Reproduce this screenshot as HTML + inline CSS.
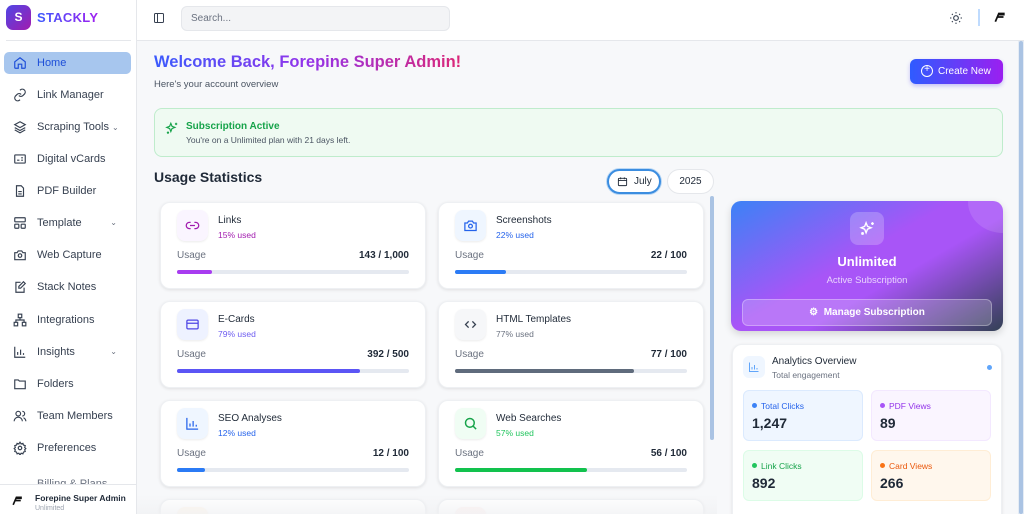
<!DOCTYPE html>
<html><head><meta charset="utf-8"><style>
*{box-sizing:border-box;margin:0;padding:0}
html,body{width:1024px;height:514px;overflow:hidden}
body{font-family:"Liberation Sans",sans-serif;background:#f7f8fa;position:relative;color:#1f2937}
#root{position:absolute;left:0;top:0;width:1024px;height:514px;overflow:hidden}
.abs{position:absolute}
.sb{left:0;top:0;width:137px;height:514px;background:#fff;border-right:1px solid #e5e7eb;overflow:hidden}
.logo{left:6px;top:5px;width:25px;height:25px;border-radius:7px;background:linear-gradient(135deg,#4f46e5,#a21caf);color:#fff;font-weight:bold;font-size:12px;text-align:center;line-height:25px}
.brand{left:37px;top:10px;font-weight:bold;font-size:13px;letter-spacing:.3px;background:linear-gradient(90deg,#3b5bfd,#a020f0);-webkit-background-clip:text;color:transparent}
.nav{left:4px;width:127px;height:22px;border-radius:5px;font-size:11px;color:#374151;line-height:22px;padding-left:33px}
.nav svg{position:absolute;left:9px;top:4px}
.nav .ch{position:absolute;right:14px;top:0;font-size:8px;color:#6b7280}
.hdr{left:137px;top:0;width:887px;height:41px;background:#fff;border-bottom:1px solid #e5e7eb}
.card{background:#fff;border-radius:10px;box-shadow:0 1px 3px rgba(0,0,0,.1);border:1px solid #eef0f3}
.ic{position:absolute;left:16px;top:7px;width:31px;height:31px;border-radius:8px;box-shadow:0 1px 2px rgba(0,0,0,.08)}
.ic svg{position:absolute;left:8px;top:8px}
.ct{position:absolute;left:57px;top:12px;font-size:10px;color:#1f2937}
.cu{position:absolute;left:57px;top:27px;font-size:8.5px}
.ul{position:absolute;left:16px;top:47px;font-size:10px;color:#6b7280}
.uv{position:absolute;right:16px;top:47px;font-size:10px;font-weight:bold;color:#1f2937}
.bar{position:absolute;left:16px;right:16px;top:67px;height:4px;border-radius:2px;background:#e5e9f0}
.bar i{display:block;height:4px;border-radius:2px}
.st{width:120px;height:51px;border-radius:6px;font-size:8.5px;padding:10px 8px}
.st b{display:block;font-size:14px;color:#1f2937;margin-top:4px}
.st .d{display:inline-block;width:5px;height:5px;border-radius:50%;margin-right:4px;vertical-align:1px}
</style></head><body><div id="root">
<div class="abs sb">
<div class="abs logo">S</div><div class="abs brand">STACKLY</div>
<div class="abs" style="left:6px;top:40px;width:125px;border-top:1px solid #e5e7eb"></div>
<div class="abs nav" style="top:52px;background:#a7c6ee;color:#1d4ed8"><svg width="14" height="14" viewBox="0 0 24 24" fill="none" stroke="#1d4ed8" stroke-width="2"><path d="M3 10l9-7 9 7v10a1 1 0 0 1-1 1h-5v-7H9v7H4a1 1 0 0 1-1-1z"/></svg>Home</div>
<div class="abs nav" style="top:84px"><svg width="14" height="14" viewBox="0 0 24 24" fill="none" stroke="#374151" stroke-width="2"><path d="M10 13a5 5 0 0 0 7 0l3-3a5 5 0 0 0-7-7l-1 1M14 11a5 5 0 0 0-7 0l-3 3a5 5 0 0 0 7 7l1-1"/></svg>Link Manager</div>
<div class="abs nav" style="top:116px"><svg width="14" height="14" viewBox="0 0 24 24" fill="none" stroke="#374151" stroke-width="2"><path d="M12 3l9 5-9 5-9-5zM3 13l9 5 9-5M3 17l9 5 9-5"/></svg>Scraping Tools <span style="font-size:8px;color:#6b7280">⌄</span></div>
<div class="abs nav" style="top:148px"><svg width="14" height="14" viewBox="0 0 24 24" fill="none" stroke="#374151" stroke-width="2"><rect x="3" y="5" width="18" height="14" rx="1"/><path d="M7 14h4M14 10h3M14 14h3"/></svg>Digital vCards</div>
<div class="abs nav" style="top:180px"><svg width="14" height="14" viewBox="0 0 24 24" fill="none" stroke="#374151" stroke-width="2"><path d="M14 3H6v18h12V7zM9 13h6M9 17h6"/></svg>PDF Builder</div>
<div class="abs nav" style="top:212px"><svg width="14" height="14" viewBox="0 0 24 24" fill="none" stroke="#374151" stroke-width="2"><rect x="3" y="3" width="18" height="7" rx="1"/><rect x="3" y="14" width="7" height="7" rx="1"/><rect x="14" y="14" width="7" height="7" rx="1"/></svg>Template<span class="ch">⌄</span></div>
<div class="abs nav" style="top:244px"><svg width="14" height="14" viewBox="0 0 24 24" fill="none" stroke="#374151" stroke-width="2"><path d="M3 8h4l2-3h6l2 3h4v12H3z"/><circle cx="12" cy="13" r="3"/></svg>Web Capture</div>
<div class="abs nav" style="top:276px"><svg width="14" height="14" viewBox="0 0 24 24" fill="none" stroke="#374151" stroke-width="2"><path d="M13 4H5v17h14v-8M18 3l3 3-8 8h-3v-3z"/></svg>Stack Notes</div>
<div class="abs nav" style="top:309px"><svg width="14" height="14" viewBox="0 0 24 24" fill="none" stroke="#374151" stroke-width="2"><rect x="9" y="2" width="6" height="6"/><rect x="2" y="16" width="6" height="6"/><rect x="16" y="16" width="6" height="6"/><path d="M5 16v-4h14v4M12 8v4"/></svg>Integrations</div>
<div class="abs nav" style="top:341px"><svg width="14" height="14" viewBox="0 0 24 24" fill="none" stroke="#374151" stroke-width="2"><path d="M3 3v18h18M8 17v-5M13 17V8M18 17v-3"/></svg>Insights<span class="ch">⌄</span></div>
<div class="abs nav" style="top:373px"><svg width="14" height="14" viewBox="0 0 24 24" fill="none" stroke="#374151" stroke-width="2"><path d="M3 5h6l2 2h10v13H3z"/></svg>Folders</div>
<div class="abs nav" style="top:405px"><svg width="14" height="14" viewBox="0 0 24 24" fill="none" stroke="#374151" stroke-width="2"><circle cx="9" cy="8" r="4"/><path d="M2 21a7 7 0 0 1 14 0M16 4a4 4 0 0 1 0 8M22 21a7 7 0 0 0-4-6"/></svg>Team Members</div>
<div class="abs nav" style="top:437px"><svg width="14" height="14" viewBox="0 0 24 24" fill="none" stroke="#374151" stroke-width="2"><circle cx="12" cy="12" r="3"/><path d="M12 2l2 3 3-1 1 3 3 1-1 3 2 2-2 2 1 3-3 1-1 3-3-1-2 3-2-3-3 1-1-3-3-1 1-3-2-2 2-2-1-3 3-1 1-3 3 1z"/></svg>Preferences</div>
<div class="abs nav" style="top:473px;color:#6b7280">Billing &amp; Plans</div>
<div class="abs" style="left:0;top:484px;width:136px;height:30px;background:#fff;border-top:1px solid #e5e7eb">
<svg class="abs" style="left:11px;top:9px" width="13" height="13" viewBox="0 0 24 24" fill="none" stroke="#111" stroke-width="3"><path d="M4 20l6-14h10M8 12h10M9 8h11"/></svg>
<div class="abs" style="left:35px;top:8px;font-size:8.5px;font-weight:bold">Forepine Super Admin</div>
<div class="abs" style="left:35px;top:20px;font-size:7px;color:#9ca3af">Unlimited</div></div>
</div>
<div class="abs hdr">
<svg class="abs" style="left:16px;top:12px" width="12" height="12" viewBox="0 0 24 24" fill="none" stroke="#374151" stroke-width="2"><rect x="3" y="3" width="18" height="18" rx="2"/><path d="M9 3v18"/></svg>
<div class="abs" style="left:44px;top:6px;width:269px;height:25px;border-radius:6px;background:#f3f4f6;border:1px solid #e5e7eb;font-size:10px;color:#6b7280;line-height:23px;padding-left:9px">Search...</div>
<svg class="abs" style="left:812px;top:11px" width="14" height="14" viewBox="0 0 24 24" fill="none" stroke="#374151" stroke-width="2"><circle cx="12" cy="12" r="4"/><path d="M12 2v2M12 20v2M2 12h2M20 12h2M5 5l1.5 1.5M17.5 17.5L19 19M5 19l1.5-1.5M17.5 6.5L19 5"/></svg>
<div class="abs" style="left:841px;top:9px;width:2px;height:17px;background:#bfdbfe"></div>
<svg class="abs" style="left:856px;top:10px" width="14" height="14" viewBox="0 0 24 24" fill="none" stroke="#111" stroke-width="3"><path d="M4 20l6-14h10M8 12h10M9 8h11"/></svg>
</div>
<div class="abs" style="left:1018px;top:41px;width:6px;height:473px;background:#e5ecf5"><div style="margin:0 1px;height:473px;background:#aac3e3;border-radius:3px"></div></div>
<div class="abs" style="left:154px;top:53px;font-size:16.5px;font-weight:bold;background:linear-gradient(90deg,#3b5bfd,#9333ea 50%,#db2777);-webkit-background-clip:text;color:transparent">Welcome Back, Forepine Super Admin!</div>
<div class="abs" style="left:154px;top:79px;font-size:9.5px;color:#4b5563">Here's your account overview</div>
<div class="abs" style="left:910px;top:59px;width:93px;height:25px;border-radius:6px;background:linear-gradient(90deg,#2f5bff,#9b1ff0);color:#fff;font-size:10px;line-height:25px;padding-left:28px;box-shadow:0 2px 4px rgba(80,60,240,.3)"><span style="position:absolute;left:11px;top:6px;width:12px;height:12px;border:1.5px solid #fff;border-radius:50%;font-size:10px;line-height:8px;text-align:center">+</span>Create New</div>
<div class="abs" style="left:154px;top:108px;width:849px;height:49px;border-radius:8px;background:#effaf2;border:1px solid #bfeccc">
<svg class="abs" style="left:10px;top:12px" width="14" height="14" viewBox="0 0 24 24" fill="none" stroke="#16a34a" stroke-width="2"><path d="M10 4l2 5 5 2-5 2-2 5-2-5-5-2 5-2zM19 3v4M17 5h4M5 19a1 1 0 1 0 0.1 0"/></svg>
<div class="abs" style="left:31px;top:12px;font-size:10px;font-weight:bold;color:#16a34a">Subscription Active</div>
<div class="abs" style="left:31px;top:26px;font-size:8.5px;color:#4b5563">You're on a Unlimited plan with 21 days left.</div></div>
<div class="abs" style="left:154px;top:169px;font-size:14px;font-weight:bold">Usage Statistics</div>
<div class="abs" style="left:607px;top:169px;width:54px;height:25px;border-radius:13px;background:#fff;border:2px solid #3b8de0;font-size:10px;line-height:21px;padding-left:25px;box-shadow:0 0 0 1px #bcd9f5"><svg class="abs" style="left:8px;top:5px" width="11" height="11" viewBox="0 0 24 24" fill="none" stroke="#1f2937" stroke-width="2"><rect x="3" y="5" width="18" height="16" rx="2"/><path d="M3 10h18M8 3v4M16 3v4"/></svg>July</div>
<div class="abs" style="left:667px;top:169px;width:47px;height:25px;border-radius:13px;background:#fff;border:1px solid #e5e7eb;font-size:10px;line-height:23px;text-align:center">2025</div>
<div class="abs" style="left:710px;top:196px;width:4px;height:244px;background:#aac3e3;border-radius:2px"></div>

<div class="abs card" style="left:160px;top:202px;width:266px;height:87px"><div class="ic" style="background:#faf5ff"><svg width="15" height="15" viewBox="0 0 24 24" fill="none" stroke="#a21caf" stroke-width="2"><path d="M9 7H7a5 5 0 0 0 0 10h2M15 7h2a5 5 0 0 1 0 10h-2M8 12h8"/></svg></div><div class="ct">Links</div><div class="cu" style="color:#a21caf">15% used</div><div class="ul">Usage</div><div class="uv">143 / 1,000</div><div class="bar"><i style="width:15%;background:#a83cf0"></i></div></div>
<div class="abs card" style="left:438px;top:202px;width:266px;height:87px"><div class="ic" style="background:#eff6ff"><svg width="15" height="15" viewBox="0 0 24 24" fill="none" stroke="#2563eb" stroke-width="2"><path d="M3 8h4l2-3h6l2 3h4v12H3z"/><circle cx="12" cy="13" r="3"/></svg></div><div class="ct">Screenshots</div><div class="cu" style="color:#2563eb">22% used</div><div class="ul">Usage</div><div class="uv">22 / 100</div><div class="bar"><i style="width:22%;background:#2b7bf5"></i></div></div>
<div class="abs card" style="left:160px;top:301px;width:266px;height:87px"><div class="ic" style="background:#eef2ff"><svg width="15" height="15" viewBox="0 0 24 24" fill="none" stroke="#4f46e5" stroke-width="2"><rect x="3" y="5" width="18" height="14" rx="2"/><path d="M3 10h18"/></svg></div><div class="ct">E-Cards</div><div class="cu" style="color:#6d5cf0">79% used</div><div class="ul">Usage</div><div class="uv">392 / 500</div><div class="bar"><i style="width:79%;background:#5b55f5"></i></div></div>
<div class="abs card" style="left:438px;top:301px;width:266px;height:87px"><div class="ic" style="background:#f6f7f9"><svg width="15" height="15" viewBox="0 0 24 24" fill="none" stroke="#374151" stroke-width="2"><path d="M9 7l-5 5 5 5M15 7l5 5-5 5"/></svg></div><div class="ct">HTML Templates</div><div class="cu" style="color:#6b7280">77% used</div><div class="ul">Usage</div><div class="uv">77 / 100</div><div class="bar"><i style="width:77%;background:#5f6b7c"></i></div></div>
<div class="abs card" style="left:160px;top:400px;width:266px;height:87px"><div class="ic" style="background:#eff6ff"><svg width="15" height="15" viewBox="0 0 24 24" fill="none" stroke="#2563eb" stroke-width="2"><path d="M3 3v18h18M8 17v-5M13 17V8M18 17v-3"/></svg></div><div class="ct">SEO Analyses</div><div class="cu" style="color:#2563eb">12% used</div><div class="ul">Usage</div><div class="uv">12 / 100</div><div class="bar"><i style="width:12%;background:#2b7bf5"></i></div></div>
<div class="abs card" style="left:438px;top:400px;width:266px;height:87px"><div class="ic" style="background:#f0fdf4"><svg width="15" height="15" viewBox="0 0 24 24" fill="none" stroke="#16a34a" stroke-width="2.4"><circle cx="11" cy="11" r="7"/><path d="M16 16l5 5"/></svg></div><div class="ct">Web Searches</div><div class="cu" style="color:#22c55e">57% used</div><div class="ul">Usage</div><div class="uv">56 / 100</div><div class="bar"><i style="width:57%;background:#12c24e"></i></div></div>
<div class="abs card" style="left:160px;top:499px;width:266px;height:15px;border-bottom:none;border-radius:10px 10px 0 0"><div class="ic" style="background:#fff7ed;height:10px;border-radius:8px 8px 0 0"></div></div>
<div class="abs card" style="left:438px;top:499px;width:266px;height:15px;border-bottom:none;border-radius:10px 10px 0 0"><div class="ic" style="background:#fef2f2;height:10px;border-radius:8px 8px 0 0"></div></div>
<div class="abs" style="left:137px;top:494px;width:580px;height:20px;background:linear-gradient(rgba(247,248,250,0),rgba(240,241,243,.7))"></div>

<div class="abs" style="left:731px;top:201px;width:272px;height:130px;border-radius:10px;background:linear-gradient(150deg,#3b82f6 0%,#a855f7 45%,#a855f7 60%,#334155 100%);overflow:hidden;box-shadow:0 3px 8px rgba(0,0,0,.15)">
<div class="abs" style="left:237px;top:-30px;width:70px;height:62px;border-radius:50%;background:rgba(255,255,255,.12)"></div>
<div class="abs" style="left:119px;top:11px;width:34px;height:33px;border-radius:8px;background:rgba(255,255,255,.22)"><svg class="abs" style="left:9px;top:8px" width="17" height="17" viewBox="0 0 24 24" fill="none" stroke="#fff" stroke-width="2"><path d="M10 4l2 5 5 2-5 2-2 5-2-5-5-2 5-2zM19 3v4M17 5h4"/><circle cx="5" cy="19" r="1"/></svg></div>
<div class="abs" style="left:0;width:272px;top:53px;text-align:center;color:#fff;font-weight:bold;font-size:13px">Unlimited</div>
<div class="abs" style="left:0;width:272px;top:74px;text-align:center;color:rgba(255,255,255,.75);font-size:9.5px">Active Subscription</div>
<div class="abs" style="left:11px;top:98px;width:250px;height:27px;border-radius:6px;background:rgba(255,255,255,.2);border:1px solid rgba(255,255,255,.3);color:#fff;font-size:10px;font-weight:bold;text-align:center;line-height:25px">⚙&nbsp; Manage Subscription</div></div>

<div class="abs card" style="left:732px;top:344px;width:270px;height:180px">
<div class="abs" style="left:10px;top:11px;width:22px;height:22px;border-radius:6px;background:#eff6ff"><svg class="abs" style="left:5px;top:5px" width="12" height="12" viewBox="0 0 24 24" fill="none" stroke="#60a5fa" stroke-width="2"><path d="M3 3v18h18M8 17v-5M13 17V8M18 17v-3"/></svg></div>
<div class="abs" style="left:39px;top:11px;font-size:10px">Analytics Overview</div>
<div class="abs" style="left:39px;top:25px;font-size:8.5px;color:#6b7280">Total engagement</div>
<div class="abs" style="left:254px;top:20px;width:5px;height:5px;border-radius:50%;background:#60a5fa"></div>
<div class="abs st" style="left:10px;top:45px;background:#eff6ff;border:1px solid #dbeafe;color:#2563eb"><span class="d" style="background:#3b82f6"></span>Total Clicks<b>1,247</b></div>
<div class="abs st" style="left:138px;top:45px;background:#faf5ff;border:1px solid #f3e8ff;color:#9333ea"><span class="d" style="background:#a855f7"></span>PDF Views<b>89</b></div>
<div class="abs st" style="left:10px;top:105px;background:#f0fdf4;border:1px solid #dcfce7;color:#16a34a"><span class="d" style="background:#22c55e"></span>Link Clicks<b>892</b></div>
<div class="abs st" style="left:138px;top:105px;background:#fff7ed;border:1px solid #ffedd5;color:#ea580c"><span class="d" style="background:#f97316"></span>Card Views<b>266</b></div>
</div>
</div></body></html>
